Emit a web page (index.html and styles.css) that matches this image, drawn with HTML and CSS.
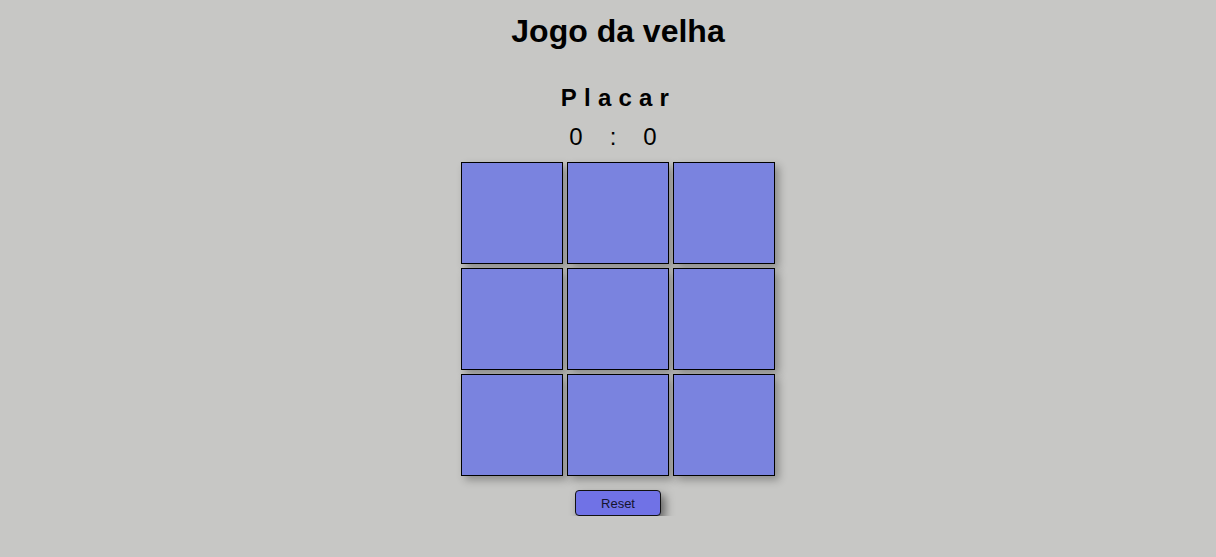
FILE: index.html
```html
<!DOCTYPE html>
<html lang="pt">
<head>
<meta charset="utf-8">
<title>Jogo da velha</title>
<link rel="stylesheet" href="styles.css">
</head>
<body>
<main class="page">
  <h1 class="title">Jogo da velha</h1>
  <h2 class="placar">Placar</h2>
  <div class="score"><span>0</span><span>:</span><span>0</span></div>
  <div class="board">
    <div class="cell"></div><div class="cell"></div><div class="cell"></div>
    <div class="cell"></div><div class="cell"></div><div class="cell"></div>
    <div class="cell"></div><div class="cell"></div><div class="cell"></div>
  </div>
  <button class="reset">Reset</button>
</main>
</body>
</html>
```
FILE: styles.css
```css
html, body {
  margin: 0;
  padding: 0;
  background: #c7c7c5;
}
body {
  font-family: "Liberation Sans", Arial, sans-serif;
  color: #000;
}
.page {
  display: flex;
  flex-direction: column;
  align-items: center;
  padding-left: 20px;
  padding-top: 13px;
}
.title {
  margin: 0;
  font-size: 32px;
  font-weight: bold;
  line-height: 37px;
}
.placar {
  margin: 34px 0 0 0;
  font-size: 24px;
  font-weight: bold;
  letter-spacing: 7.2px;
  line-height: 28px;
  padding-left: 1px;
}
.score {
  display: flex;
  gap: 27px;
  font-size: 24px;
  line-height: 28px;
  margin-top: 11px;
  padding-right: 10px;
}
.board {
  display: grid;
  grid-template-columns: repeat(3, 102px);
  grid-auto-rows: 102px;
  gap: 4px;
  margin-top: 11px;
}
.cell {
  background: #7a83df;
  border: 1px solid #000;
  box-shadow: 4px 4px 8px rgba(0, 0, 0, 0.3);
}
.reset {
  margin-top: 14px;
  width: 86px;
  height: 26px;
  background: #7072e6;
  border: 1px solid #111;
  border-radius: 4px;
  font-family: "Liberation Sans", Arial, sans-serif;
  font-size: 13px;
  color: #14142e;
  box-shadow: 4px 5px 10px rgba(0, 0, 0, 0.5);
  padding: 0;
}
```
